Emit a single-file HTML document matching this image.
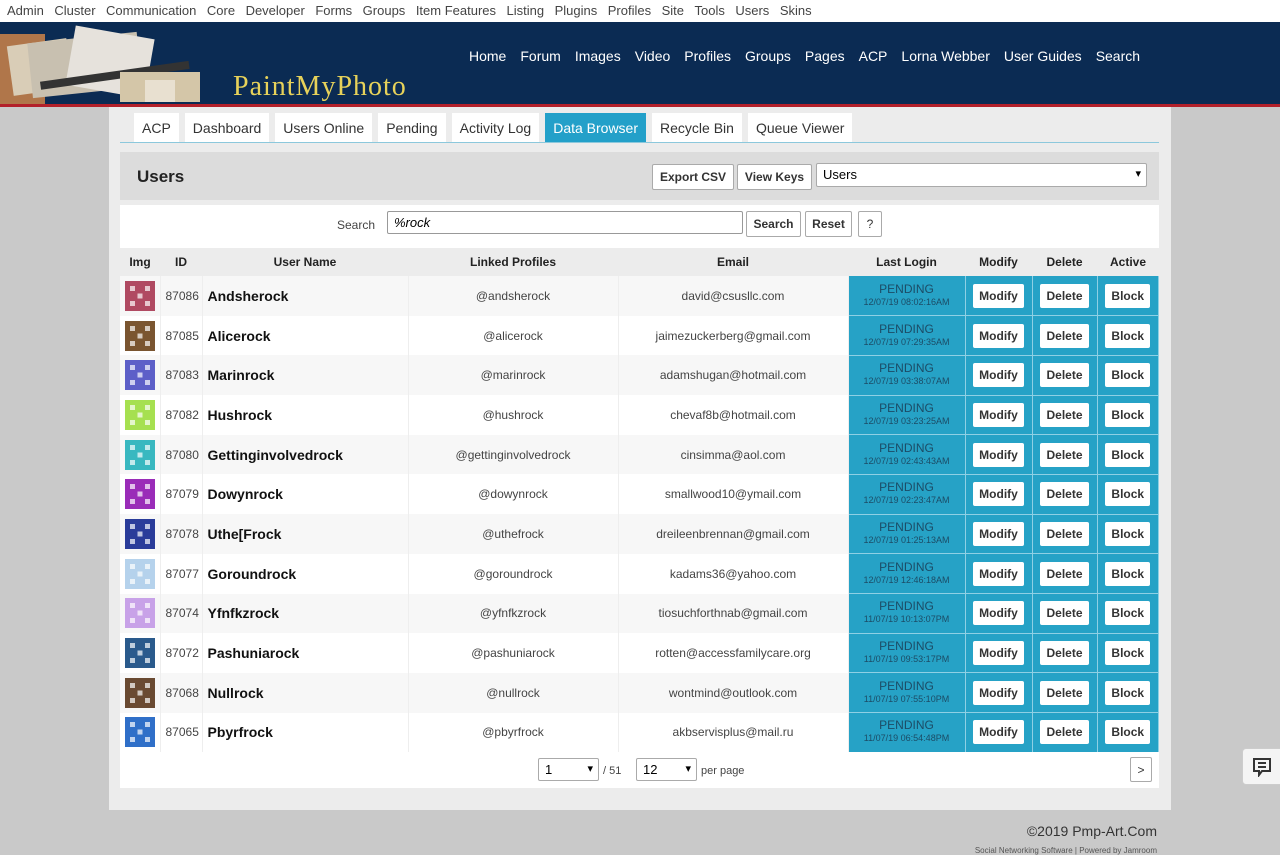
<!DOCTYPE html>
<html><head><meta charset="utf-8"><style>
*{box-sizing:border-box;margin:0;padding:0}
body{width:1280px;height:851px;overflow:hidden;background:#c9c9c9;font-family:"Liberation Sans",sans-serif;position:relative}
.top{height:22px;background:#fff;font-size:13px;color:#444;padding:3px 0 0 7px;white-space:nowrap}
.top span{margin-right:10.5px}
.hdr{position:absolute;top:22px;left:0;width:1280px;height:85px;background:#0b2b53;border-bottom:3px solid #b3202a}
.logo{position:absolute;left:233px;top:49px;font-family:"Liberation Serif",serif;font-size:28px;color:#e7d25a;letter-spacing:1px}
.nav{position:absolute;left:469px;top:26px;font-size:14px;color:#fff;white-space:nowrap}
.nav span{margin-right:14px}
.cont{position:absolute;left:109px;top:107px;width:1062px;height:703px;background:#ececec}
.tabs{position:absolute;left:134px;top:113px;display:flex;gap:6px}
.tab{background:#fff;height:29px;font-size:14px;color:#333;padding:7px 8px 0;white-space:nowrap}
.tab.a{background:#23a0c9;color:#fff}
.tline{position:absolute;left:120px;top:142px;width:1039px;height:1px;background:#8cc8dc}
.panel{position:absolute;left:120px;top:152px;width:1039px;height:48px;background:#dcdcdc}
.btn{position:absolute;background:#fff;border:1px solid #aaa;border-radius:2px;font-size:12px;font-weight:bold;color:#333;text-align:center;line-height:24px;height:26px}
.sp{position:absolute;left:120px;top:205px;width:1039px;height:43px;background:#fff}
table{position:absolute;left:120px;top:248px;width:1039px;border-collapse:collapse;font-size:12px;color:#333}
th{height:28px;background:#ececec;font-size:12px;font-weight:bold;color:#222}
td{height:39.7px;border-right:1px solid #eee;text-align:center;color:#444}
tr:nth-child(even) td{background:#fff}tr:nth-child(odd) td{background:#f7f7f7}
td.u{text-align:left;font-weight:bold;font-size:14px;color:#111;padding-left:5px}
td.id{text-align:left;padding-left:5px}
td.l{background:#26a2c6!important;color:#1c4c66;font-size:12px;line-height:13px;border-bottom:1px solid #8fd0e4;border-right:1px solid #8fd0e4}
td.l small{font-size:9px;display:block;color:#1c4c66}
td.b{background:#26a2c6!important;border-bottom:1px solid #8fd0e4;border-right:1px solid #8fd0e4}
td.b span{display:inline-block;background:#fff;border-radius:2px;font-weight:bold;font-size:12px;color:#333;padding:0 6px;line-height:24px}
.av{width:30px;height:30px;margin:0 auto;display:block}
.pg{position:absolute;left:120px;top:752px;width:1039px;height:36px;background:#fff;font-size:11px;color:#444}
.sel{position:absolute;border:1px solid #aaa;border-radius:2px;height:23px;font-size:13px;padding:3px 0 0 6px;background:#fff}
.sel:after{content:"▾";position:absolute;right:5px;top:3px;font-size:11px}
.sel.n:after{content:""}
</style></head><body>
<div class="top"><span>Admin</span><span>Cluster</span><span>Communication</span><span>Core</span><span>Developer</span><span>Forms</span><span>Groups</span><span>Item Features</span><span>Listing</span><span>Plugins</span><span>Profiles</span><span>Site</span><span>Tools</span><span>Users</span><span>Skins</span></div>
<div class="hdr">
<svg width="230" height="82" style="position:absolute;left:0;top:0"><rect x="0" y="12" width="45" height="70" fill="#b0764a"/><rect x="10" y="20" width="60" height="50" fill="#d9cdb7" transform="rotate(-8 40 45)"/><rect x="30" y="16" width="110" height="55" fill="#c8c0b0" transform="rotate(-6 80 45)"/><rect x="70" y="10" width="80" height="60" fill="#e6e2dc" transform="rotate(10 110 40)"/><rect x="40" y="50" width="150" height="8" fill="#333" transform="rotate(-8 110 55)"/><rect x="120" y="50" width="80" height="30" fill="#d4c6a8"/><rect x="145" y="58" width="30" height="22" fill="#e8e0d0"/></svg>
<div class="logo">PaintMyPhoto</div>
<div class="nav"><span>Home</span><span>Forum</span><span>Images</span><span>Video</span><span>Profiles</span><span>Groups</span><span>Pages</span><span>ACP</span><span>Lorna Webber</span><span>User Guides</span><span>Search</span></div>
</div>
<div class="cont"></div>
<div class="tabs"><div class="tab">ACP</div><div class="tab">Dashboard</div><div class="tab">Users Online</div><div class="tab">Pending</div><div class="tab">Activity Log</div><div class="tab a">Data Browser</div><div class="tab">Recycle Bin</div><div class="tab">Queue Viewer</div></div>
<div class="tline"></div>
<div class="panel"><div style="position:absolute;left:17px;top:15px;font-size:17px;font-weight:bold;color:#222">Users</div></div>
<div class="btn" style="left:652px;top:164px;width:82px">Export CSV</div>
<div class="btn" style="left:737px;top:164px;width:75px">View Keys</div>
<div class="sel" style="left:816px;top:163px;width:331px;height:24px">Users</div>
<div class="sp"><div style="position:absolute;left:217px;top:13px;font-size:12px;color:#444">Search</div></div>
<div class="sel n" style="left:387px;top:211px;width:356px;border-color:#999;font-style:italic;font-size:13px">%rock</div>
<div class="btn" style="left:746px;top:211px;width:55px">Search</div>
<div class="btn" style="left:805px;top:211px;width:47px">Reset</div>
<div class="btn" style="left:858px;top:211px;width:24px;font-weight:normal">?</div>
<table>
<tr><th style="width:40px">Img</th><th style="width:42px;text-align:left;padding-left:15px">ID</th><th style="width:206px">User Name</th><th style="width:210px">Linked Profiles</th><th style="width:230px">Email</th><th style="width:117px">Last Login</th><th style="width:67px">Modify</th><th style="width:65px">Delete</th><th>Active</th></tr>
</table>
<table style="top:276px" id="t"></table>
<script>
var d=[["87086","Andsherock","andsherock","david@csusllc.com","12/07/19 08:02:16AM","#b04a62"],["87085","Alicerock","alicerock","jaimezuckerberg@gmail.com","12/07/19 07:29:35AM","#7a5530"],["87083","Marinrock","marinrock","adamshugan@hotmail.com","12/07/19 03:38:07AM","#5d5fc8"],["87082","Hushrock","hushrock","chevaf8b@hotmail.com","12/07/19 03:23:25AM","#a6e050"],["87080","Gettinginvolvedrock","gettinginvolvedrock","cinsimma@aol.com","12/07/19 02:43:43AM","#39b8c0"],["87079","Dowynrock","dowynrock","smallwood10@ymail.com","12/07/19 02:23:47AM","#9a2cb8"],["87078","Uthe[Frock","uthefrock","dreileenbrennan@gmail.com","12/07/19 01:25:13AM","#2a3c9a"],["87077","Goroundrock","goroundrock","kadams36@yahoo.com","12/07/19 12:46:18AM","#b5d2ec"],["87074","Yfnfkzrock","yfnfkzrock","tiosuchforthnab@gmail.com","11/07/19 10:13:07PM","#c8a2e8"],["87072","Pashuniarock","pashuniarock","rotten@accessfamilycare.org","11/07/19 09:53:17PM","#2a5a8c"],["87068","Nullrock","nullrock","wontmind@outlook.com","11/07/19 07:55:10PM","#6a4a32"],["87065","Pbyrfrock","pbyrfrock","akbservisplus@mail.ru","11/07/19 06:54:48PM","#2f6fc8"]];
var h="";d.forEach(function(r){h+='<tr><td style="width:40px"><svg class="av" viewBox="0 0 6 6"><rect width="6" height="6" fill="'+r[5]+'"/><rect x="1" y="1" width="1" height="1" fill="#fff" opacity=".7"/><rect x="4" y="1" width="1" height="1" fill="#fff" opacity=".7"/><rect x="2.5" y="2.5" width="1" height="1" fill="#fff" opacity=".7"/><rect x="1" y="4" width="1" height="1" fill="#fff" opacity=".7"/><rect x="4" y="4" width="1" height="1" fill="#fff" opacity=".7"/></svg></td><td class="id" style="width:42px">'+r[0]+'</td><td class="u" style="width:206px">'+r[1]+'</td><td style="width:210px">@'+r[2]+'</td><td style="width:230px">'+r[3]+'</td><td class="l" style="width:117px">PENDING<small>'+r[4]+'</small></td><td class="b" style="width:67px"><span>Modify</span></td><td class="b" style="width:65px"><span>Delete</span></td><td class="b"><span>Block</span></td></tr>'});
document.getElementById("t").innerHTML=h;
</script>
<div class="pg"><div style="position:absolute;left:483px;top:13px">/ 51</div><div style="position:absolute;left:581px;top:13px">per page</div></div>
<div class="sel" style="left:538px;top:758px;width:61px">1</div>
<div class="sel" style="left:636px;top:758px;width:61px">12</div>
<div class="btn" style="left:1130px;top:757px;width:22px;height:25px;font-weight:normal">&gt;</div>
<div style="position:absolute;left:1242px;top:748px;width:40px;height:37px;background:#f4f4f4;border:1px solid #ccc;border-radius:4px 0 0 4px"><svg width="20" height="20" style="position:absolute;left:9px;top:8px" viewBox="0 0 20 20" fill="none" stroke="#333" stroke-width="2"><path d="M2 2h16v12h-8l-3 4v-4H2z"/><path d="M6 6h8M6 10h8"/></svg></div>
<div style="position:absolute;right:123px;top:823px;font-size:14px;color:#333">©2019 Pmp-Art.Com</div>
<div style="position:absolute;right:123px;top:846px;font-size:8px;color:#555">Social Networking Software | Powered by Jamroom</div>
</body></html>
